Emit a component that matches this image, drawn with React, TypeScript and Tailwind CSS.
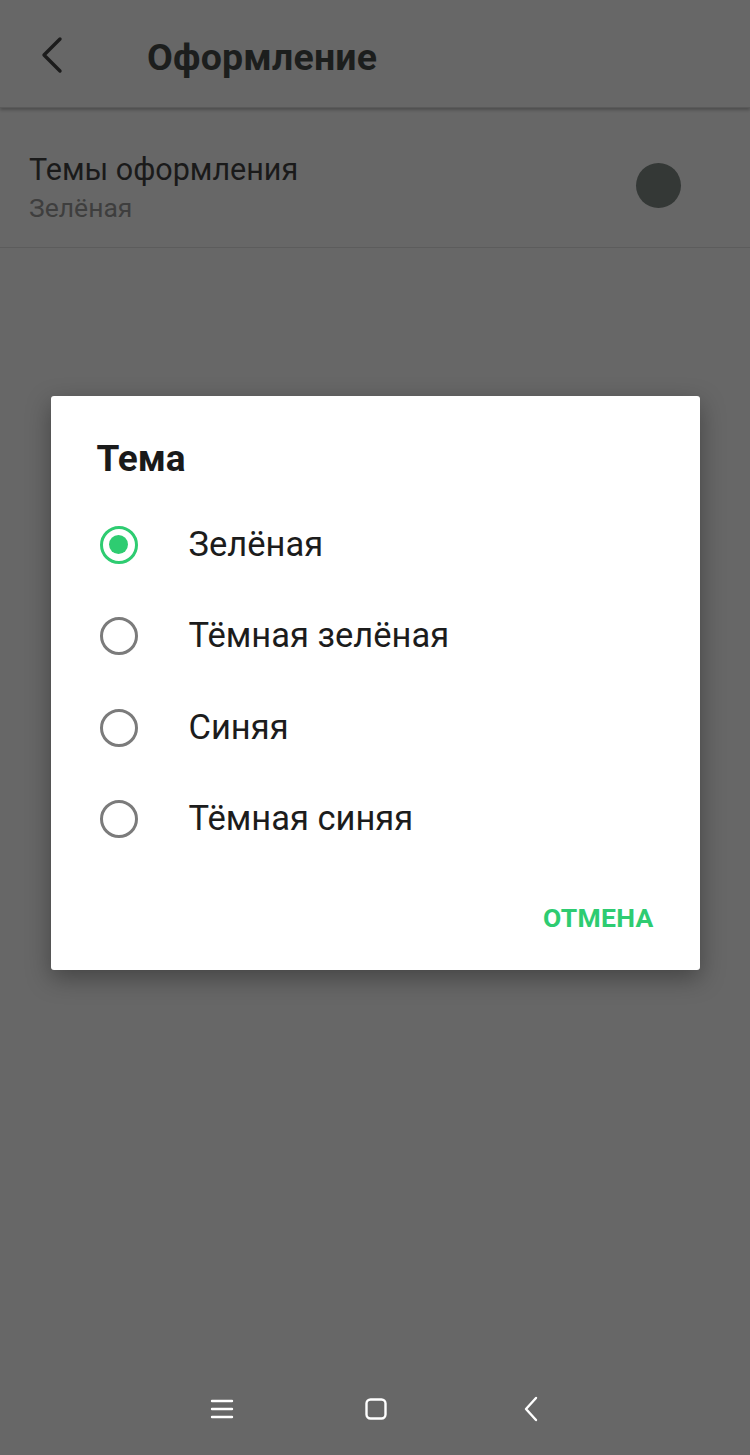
export default function App() {
  const options = ["Зелёная", "Тёмная зелёная", "Синяя", "Тёмная синяя"];
  return (
    <div className="w-[750px] h-[1455px] bg-[#676767] flex flex-col font-['Roboto',sans-serif]">
      {/* Toolbar */}
      <div className="h-[108px] flex items-center pt-[6px] shadow-[0_2px_3px_rgba(0,0,0,0.25)] border-b border-[#5a5a5a]">
        <svg className="ml-[38px] w-[28px] h-[40px] -mt-[4px]" viewBox="0 0 28 40" fill="none">
          <path d="M22 4 L6 20 L22 36" stroke="#1c1c1c" strokeWidth="3.4" strokeLinecap="round" strokeLinejoin="round" />
        </svg>
        <div className="ml-[81px] text-[37.5px] font-bold text-[#1c1e1d] tracking-[0.2px] mt-[2px]">Оформление</div>
      </div>

      {/* Setting row */}
      <div className="h-[140px] flex items-center justify-between pl-[29px] pr-[69px] border-b border-[#5c5c5c]">
        <div className="flex flex-col pt-[20px]">
          <div className="text-[30.5px] leading-[40px] text-[#1a1a1a]">Темы оформления</div>
          <div className="text-[26.5px] leading-[36px] text-[#3e3e3e]">Зелёная</div>
        </div>
        <div className="w-[45px] h-[45px] rounded-full bg-[#343836] mt-[16px]" />
      </div>

      {/* Dialog */}
      <div className="flex justify-center pt-[148px]">
        <div className="w-[649px] h-[574px] bg-white rounded-[3px] shadow-[0_8px_24px_rgba(0,0,0,0.35)] flex flex-col">
          <div className="pl-[46px] pt-[40px] text-[37px] font-bold text-[#1a1a1a] leading-[46px]">Тема</div>
          <div className="flex flex-col mt-[17px]">
            {options.map((o, i) => (
              <div key={o} className="h-[91.5px] flex items-center pl-[49px]">
                <div
                  className={
                    i === 0
                      ? "w-[38px] h-[38px] rounded-full border-[3.5px] border-[#2ecc71] flex items-center justify-center"
                      : "w-[38px] h-[38px] rounded-full border-[3px] border-[#7b7b7b]"
                  }
                >
                  {i === 0 && <div className="w-[19px] h-[19px] rounded-full bg-[#2ecc71]" />}
                </div>
                <div className="ml-[51px] text-[34.5px] text-[#1c1c1c]">{o}</div>
              </div>
            ))}
          </div>
          <div className="flex justify-end pr-[46px] mt-[33px]">
            <div className="text-[26.5px] font-bold text-[#2ecc71] tracking-[0.3px]">ОТМЕНА</div>
          </div>
        </div>
      </div>

      <div className="flex-1" />

      {/* Navigation bar */}
      <div className="h-[90px] flex items-center justify-center pb-[2px]">
        <svg className="w-[24px] h-[22px] mr-[130px]" viewBox="0 0 24 22">
          <path d="M2 3 H22 M2 11 H22 M2 19 H22" stroke="#fff" strokeWidth="2.4" strokeLinecap="round" />
        </svg>
        <svg className="w-[24px] h-[24px]" viewBox="0 0 24 24" fill="none">
          <rect x="2.5" y="2.5" width="19" height="19" rx="4" stroke="#fff" strokeWidth="2.4" />
        </svg>
        <svg className="w-[18px] h-[26px] ml-[134px]" viewBox="0 0 18 26" fill="none">
          <path d="M14 2 L4 13 L14 24" stroke="#fff" strokeWidth="2.4" strokeLinecap="round" strokeLinejoin="round" />
        </svg>
      </div>
    </div>
  );
}
